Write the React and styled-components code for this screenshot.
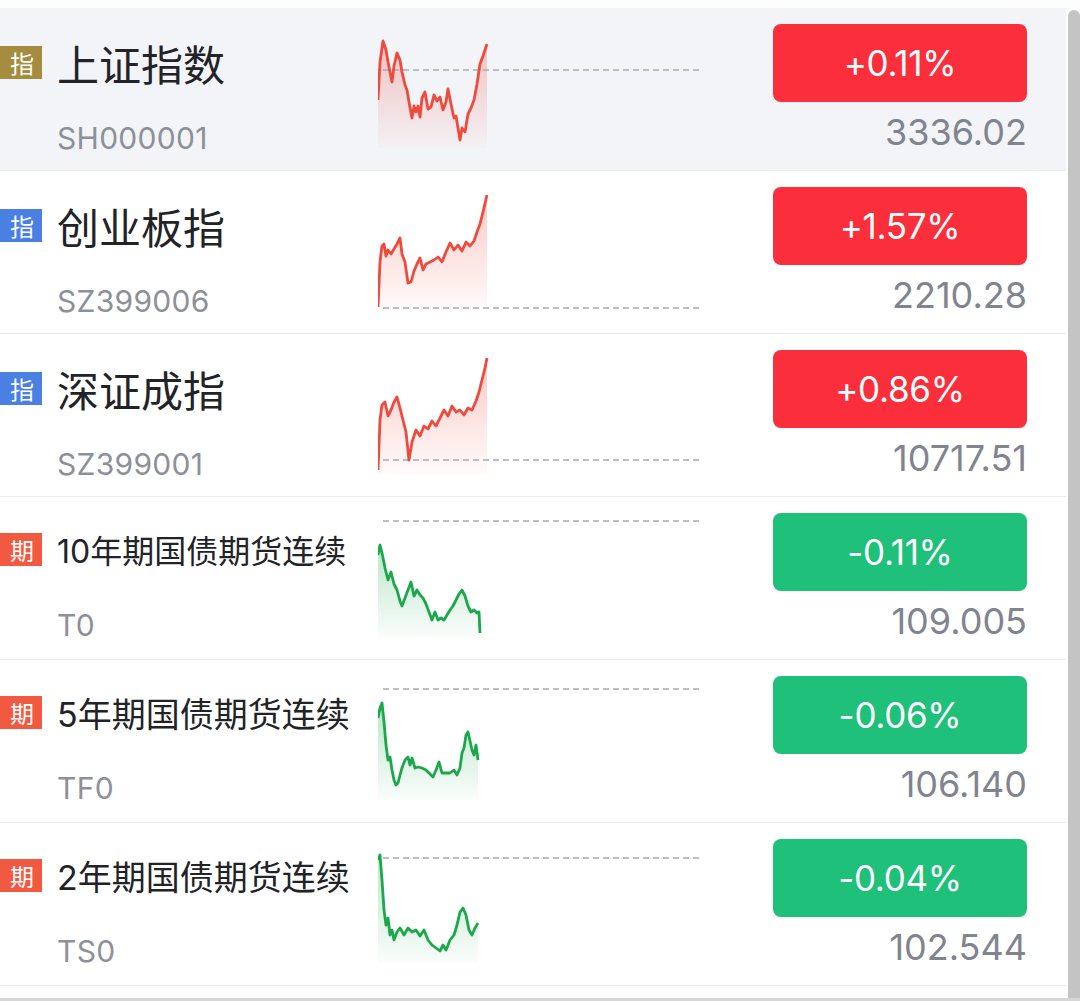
import styled, { createGlobalStyle } from 'styled-components';

const GlobalStyle = createGlobalStyle`
  html, body {
    margin: 0;
    padding: 0;
    background: #ffffff;
  }
  body {
    font-family: "Inter", "Noto Sans CJK SC", "Noto Sans", sans-serif;
  }
`;

const Page = styled.div`
  display: flex;
  width: 1080px;
  height: 1001px;
  overflow: hidden;
  background: #fdfdfd;
  border-bottom: 3px solid #d6d6d6;
  box-sizing: border-box;
`;

const List = styled.div`
  width: 1066px;
  padding-top: 8px;
  display: flex;
  flex-direction: column;
`;

const ScrollThumb = styled.div`
  width: 12px;
  margin-left: 2px;
  margin-top: 10px;
  background: #c4c4c4;
  border-radius: 6px 6px 0 0;
`;

const Row = styled.div`
  display: flex;
  height: 163px;
  box-sizing: border-box;
  border-bottom: 1px solid #ececee;
  background: ${(p) => (p.$active ? '#f3f4f8' : '#ffffff')};
`;

const Info = styled.div`
  width: 378px;
  display: flex;
  flex-direction: column;
  padding-top: ${(p) => p.$top}px;
  box-sizing: border-box;
`;

const NameLine = styled.div`
  display: flex;
  align-items: center;
  height: 50px;
  gap: 15px;
`;

const Badge = styled.span`
  width: 42px;
  height: 33px;
  flex: none;
  display: flex;
  align-items: center;
  justify-content: center;
  padding-left: 2px;
  box-sizing: border-box;
  background: ${(p) => p.$color};
  color: #ffffff;
  font-family: "Noto Sans CJK SC", sans-serif;
  font-size: 24px;
`;

const Name = styled.span`
  font-family: "Inter", "Noto Sans CJK SC", sans-serif;
  font-size: ${(p) => p.$size}px;
  color: #222327;
  white-space: nowrap;
`;

const Code = styled.div`
  margin-top: 31px;
  margin-left: 57px;
  height: 40px;
  line-height: 40px;
  font-size: 30px;
  color: #8d9099;
  letter-spacing: 0.3px;
`;

const Chart = styled.svg`
  display: block;
  flex: none;
  margin-top: 22px;
  width: 322px;
  height: 122px;
`;

const Quote = styled.div`
  margin-left: 73px;
  width: 254px;
  padding-top: 16px;
  display: flex;
  flex-direction: column;
  align-items: flex-end;
`;

const Pill = styled.div`
  width: 254px;
  height: 78px;
  border-radius: 8px;
  background: ${(p) => (p.$up ? '#fa2f3b' : '#1ec07a')};
  color: #ffffff;
  display: flex;
  align-items: center;
  justify-content: center;
  font-size: 35px;
  letter-spacing: -0.3px;
`;

const Price = styled.div`
  margin-top: 10px;
  height: 40px;
  line-height: 40px;
  font-size: 36px;
  color: #80848f;
`;

const RED = '#ef4a3c';
const GREEN = '#1aa84a';

const rows = [
  {
    badge: '指', badgeColor: '#a58c3e', name: '上证指数', size: 42, code: 'SH000001',
    change: '+0.11%', price: '3336.02', up: true, top: 8, base: 70, infoTop: 29,
    pts: [[378,100],[380,62],[383,41],[386,50],[388,62],[390,72],[392,82],[394,66],[397,53],[400,60],[402,72],[405,85],[407,90],[409,102],[412,118],[414,106],[416,112],[418,106],[420,117],[422,98],[425,92],[428,109],[431,107],[434,95],[437,101],[440,97],[443,110],[446,102],[448,89],[451,104],[454,118],[456,116],[458,128],[460,140],[462,128],[465,132],[468,114],[471,108],[474,100],[477,84],[480,64],[483,56],[487,44]],
  },
  {
    badge: '指', badgeColor: '#4a80e2', name: '创业板指', size: 42, code: 'SZ399006',
    change: '+1.57%', price: '2210.28', up: true, top: 171, base: 308, infoTop: 29,
    pts: [[378,307],[380,262],[382,246],[384,244],[386,256],[388,250],[391,254],[394,249],[397,244],[400,238],[402,254],[405,262],[408,283],[411,282],[414,271],[417,264],[420,258],[423,270],[426,264],[430,262],[434,260],[438,257],[442,262],[446,252],[450,243],[454,250],[458,245],[462,251],[466,242],[470,246],[474,241],[477,232],[480,224],[483,212],[487,195]],
  },
  {
    badge: '指', badgeColor: '#4a80e2', name: '深证成指', size: 42, code: 'SZ399001',
    change: '+0.86%', price: '10717.51', up: true, top: 334, base: 460, infoTop: 29,
    pts: [[378,470],[380,420],[382,405],[385,402],[388,416],[391,410],[394,402],[397,397],[400,408],[403,420],[406,432],[409,460],[412,442],[416,430],[420,436],[424,426],[428,429],[432,421],[436,426],[440,418],[444,410],[448,416],[452,406],[456,412],[460,410],[464,415],[468,408],[472,410],[476,401],[479,392],[482,380],[485,368],[487,358]],
  },
  {
    badge: '期', badgeColor: '#f15a40', name: '10年期国债期货连续', size: 32, code: 'T0',
    change: '-0.11%', price: '109.005', up: false, top: 497, base: 521, infoTop: 27,
    pts: [[378,555],[380,545],[382,553],[385,568],[388,580],[391,572],[394,584],[397,590],[400,601],[402,606],[405,598],[408,590],[411,582],[414,596],[417,590],[420,595],[423,598],[426,604],[429,612],[432,620],[435,612],[438,620],[441,618],[444,620],[447,615],[450,610],[453,606],[456,600],[459,594],[462,590],[465,596],[468,606],[471,612],[474,610],[477,613],[479,612],[480,633]],
  },
  {
    badge: '期', badgeColor: '#f15a40', name: '5年期国债期货连续', size: 34, code: 'TF0',
    change: '-0.06%', price: '106.140', up: false, top: 660, base: 689, infoTop: 27,
    pts: [[378,718],[380,708],[382,703],[384,722],[386,745],[388,760],[390,757],[392,770],[394,780],[396,785],[398,783],[400,775],[402,768],[405,760],[408,757],[410,765],[412,758],[415,768],[418,767],[422,768],[426,770],[430,774],[433,777],[436,770],[439,762],[442,773],[446,773],[450,773],[454,770],[457,775],[460,768],[462,753],[464,748],[466,735],[468,732],[470,741],[472,750],[474,755],[476,745],[478,760]],
  },
  {
    badge: '期', badgeColor: '#f15a40', name: '2年期国债期货连续', size: 34, code: 'TS0',
    change: '-0.04%', price: '102.544', up: false, top: 823, base: 858, infoTop: 27,
    pts: [[378,860],[380,855],[382,880],[384,910],[386,925],[388,918],[390,935],[392,930],[394,940],[397,932],[400,928],[404,935],[408,928],[412,932],[416,930],[420,936],[424,930],[428,940],[432,945],[436,948],[440,951],[443,945],[446,950],[450,940],[454,935],[457,925],[460,912],[463,908],[466,915],[469,930],[472,935],[475,928],[478,923]],
  },
];

function Spark({ row, index }) {
  const offY = row.top + 22;
  const p = row.pts.map(([x, y]) => [x - 378, y - offY]);
  const line = p.map(([x, y], i) => `${i ? 'L' : 'M'}${x},${y}`).join(' ');
  const minY = Math.min(...p.map((q) => q[1]));
  const bottom = 118;
  const lastX = p[p.length - 1][0];
  const area = `${line} L${lastX},${bottom} L0,${bottom} Z`;
  const color = row.up ? RED : GREEN;
  const baseY = row.base - offY;
  const gid = `fill${index}`;
  return (
    <Chart viewBox="0 0 322 122">
      <defs>
        <linearGradient id={gid} x1="0" y1={minY} x2="0" y2={bottom} gradientUnits="userSpaceOnUse">
          <stop offset="0" stopColor={color} stopOpacity="0.3" />
          <stop offset="1" stopColor={color} stopOpacity="0.02" />
        </linearGradient>
      </defs>
      <path d={area} fill={`url(#${gid})`} />
      <line x1="5" y1={baseY} x2="322" y2={baseY} stroke="#a9abb0" strokeWidth="1.6" strokeDasharray="6 4" />
      <path d={line} fill="none" stroke={color} strokeWidth="2.8" strokeLinejoin="round" />
    </Chart>
  );
}

export default function App() {
  return (
    <>
      <GlobalStyle />
      <Page>
        <List>
          {rows.map((row, i) => (
            <Row key={row.code} $active={i === 0}>
              <Info $top={row.infoTop}>
                <NameLine>
                  <Badge $color={row.badgeColor}>{row.badge}</Badge>
                  <Name $size={row.size}>{row.name}</Name>
                </NameLine>
                <Code>{row.code}</Code>
              </Info>
              <Spark row={row} index={i} />
              <Quote>
                <Pill $up={row.up}>{row.change}</Pill>
                <Price>{row.price}</Price>
              </Quote>
            </Row>
          ))}
        </List>
        <ScrollThumb />
      </Page>
    </>
  );
}
